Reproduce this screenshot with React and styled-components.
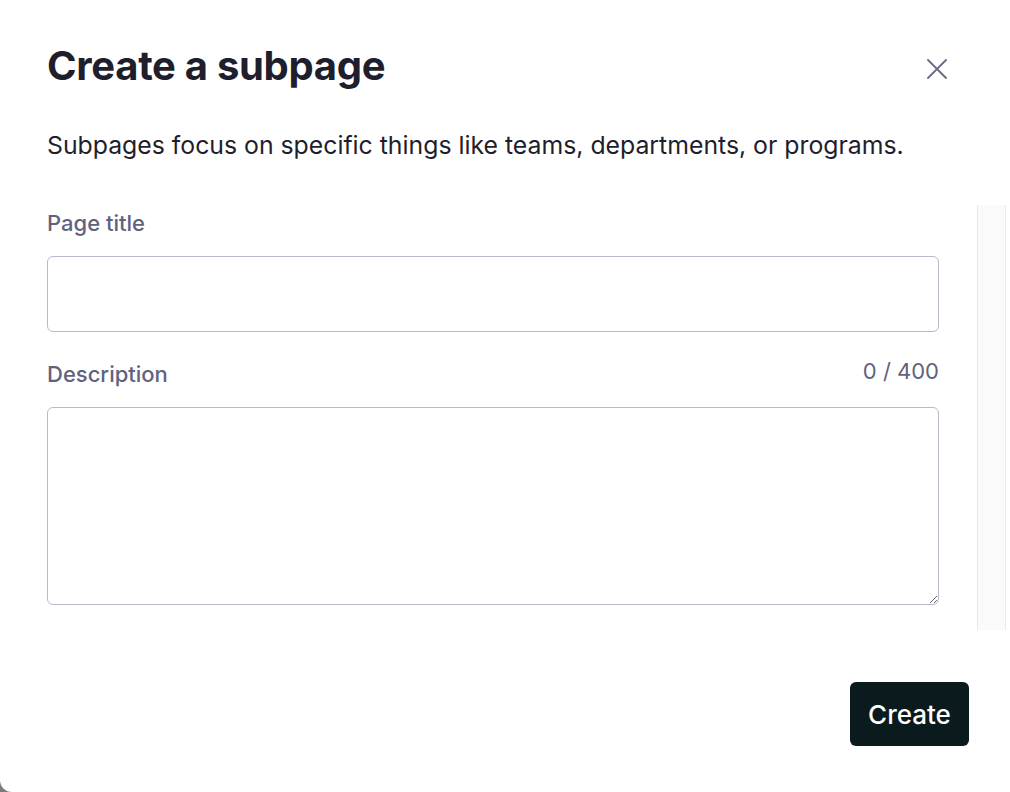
import React, { useState } from 'react';
import styled, { createGlobalStyle } from 'styled-components';

const GlobalStyle = createGlobalStyle`
    html, body {
        margin: 0;
        padding: 0;
        background: #7c7c7c;
    }

    * {
        box-sizing: border-box;
    }
`;

const Dialog = styled.div`
    width: 1010px;
    height: 792px;
    background: #fff;
    border-bottom-left-radius: 12px;
    font-family: Inter, "Noto Sans", sans-serif;
    color: #1f1e2c;
    overflow: hidden;
`;

const Header = styled.header`
    display: flex;
    justify-content: space-between;
    align-items: flex-start;
    padding: 42px 63px 0 47px;
`;

const Title = styled.h2`
    margin: 0;
    font-size: 40px;
    line-height: 48px;
    font-weight: 700;
    letter-spacing: -0.3px;
`;

const CloseButton = styled.button`
    display: flex;
    margin-top: 17px;
    padding: 0;
    border: 0;
    background: none;
    color: #6a6a86;
    cursor: pointer;
`;

const Intro = styled.p`
    margin: 39px 0 0;
    padding: 0 47px;
    font-size: 24.8px;
    line-height: 32px;
    font-weight: 400;
`;

const Body = styled.div`
    display: flex;
    height: 425px;
    margin-top: 44px;
    padding: 0 4px 0 47px;
`;

const Form = styled.div`
    flex: 1;
    padding: 4px 38px 0 0;
`;

const ScrollTrack = styled.div`
    width: 29px;
    background: #fafafa;
    border-left: 1px solid #e7e7e7;
    border-right: 1px solid #ececec;
`;

const LabelRow = styled.div`
    display: flex;
    justify-content: space-between;
    align-items: center;
    margin-top: ${({$first}) => ($first ? '0' : '28px')};
    margin-bottom: 19px;
    height: 28px;
`;

const Label = styled.label`
    font-size: 22px;
    line-height: 28px;
    font-weight: 500;
    color: #62627f;
`;

const Counter = styled.span`
    font-size: 22px;
    line-height: 28px;
    margin-top: -6px;
    color: #62627f;
`;

const fieldCss = `
    display: block;
    width: 100%;
    border: 1px solid #bab8cd;
    border-radius: 6px;
    background: #fff;
    font-family: Inter, "Noto Sans", sans-serif;
    font-size: 20px;
    color: #1f1e2c;
    outline: none;
`;

const TextInput = styled.input`
    ${fieldCss}
    height: 76px;
    padding: 0 16px;
`;

const TextArea = styled.textarea`
    ${fieldCss}
    height: 198px;
    padding: 14px 16px;
    resize: vertical;
`;

const Footer = styled.footer`
    display: flex;
    justify-content: flex-end;
    margin-top: 52px;
    padding-right: 41px;
`;

const PrimaryButton = styled.button`
    width: 119px;
    height: 64px;
    border: 0;
    border-radius: 6px;
    background: #0b1a1d;
    color: #fff;
    font-family: Inter, "Noto Sans", sans-serif;
    font-size: 26px;
    font-weight: 500;
    cursor: pointer;
`;

const CloseIcon = () => (
    <svg width="20" height="20" viewBox="0 0 20 20" fill="none">
        <path
            d="M1 1L19 19M19 1L1 19"
            stroke="currentColor"
            strokeWidth="1.8"
            strokeLinecap="round"
        />
    </svg>
);

export default function App() {
    const [title, setTitle] = useState('');
    const [description, setDescription] = useState('');

    return (
        <>
            <GlobalStyle />
            <Dialog role="dialog">
                <Header>
                    <Title>Create a subpage</Title>
                    <CloseButton aria-label="Close">
                        <CloseIcon />
                    </CloseButton>
                </Header>
                <Intro>
                    Subpages focus on specific things like teams, departments, or programs.
                </Intro>
                <Body>
                    <Form>
                        <LabelRow $first>
                            <Label htmlFor="page-title">Page title</Label>
                        </LabelRow>
                        <TextInput
                            id="page-title"
                            value={title}
                            onChange={e => setTitle(e.target.value)}
                        />
                        <LabelRow>
                            <Label htmlFor="page-description">Description</Label>
                            <Counter>{description.length} / 400</Counter>
                        </LabelRow>
                        <TextArea
                            id="page-description"
                            maxLength={400}
                            value={description}
                            onChange={e => setDescription(e.target.value)}
                        />
                    </Form>
                    <ScrollTrack />
                </Body>
                <Footer>
                    <PrimaryButton>Create</PrimaryButton>
                </Footer>
            </Dialog>
        </>
    );
}
